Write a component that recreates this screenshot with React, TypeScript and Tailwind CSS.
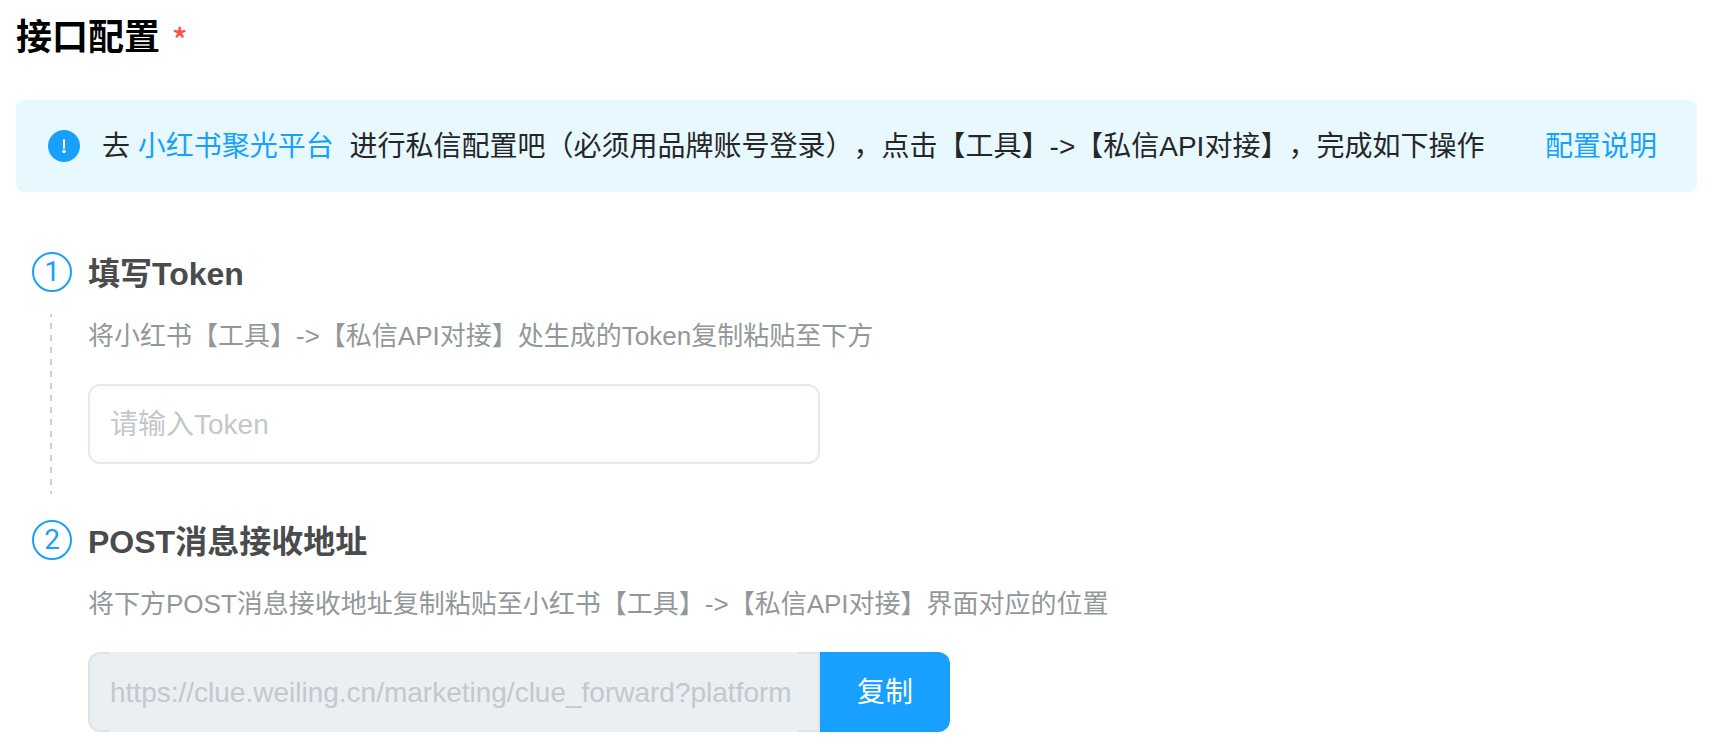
import React from 'react';

interface StepProps {
  index: number;
  title: React.ReactNode;
  description: string;
  last?: boolean;
  children: React.ReactNode;
}

const Step: React.FC<StepProps> = ({ index, title, description, last, children }) => (
  <li className="flex gap-4">
    <div className="flex w-10 shrink-0 flex-col items-center">
      <span className="flex size-10 items-center justify-center rounded-full border-2 border-[#18a0ff] font-['Roboto',sans-serif] text-[28px] leading-none text-[#18a0ff]">
        {index}
      </span>
      {!last && (
        <span className="mt-[22px] mr-0.5 mb-[26px] w-0.5 grow bg-[repeating-linear-gradient(to_bottom,#cfcfcf_0_3px,transparent_3px_9px,#cfcfcf_9px_12px)]" />
      )}
    </div>
    <div className={last ? 'min-w-0 grow' : 'min-w-0 grow pb-14'}>
      <h3 className="pt-0.5 text-[32px] leading-10 font-bold text-[#4a4b4d]">{title}</h3>
      <p className="mt-[22px] mb-7 text-[26px] leading-10 text-[#929899]">{description}</p>
      {children}
    </div>
  </li>
);

export default function App() {
  return (
    <main className="pt-3 pr-[21px] pb-4 pl-4 font-['Liberation_Sans','Noto_Sans_CJK_SC',sans-serif] [text-spacing-trim:space-all]">
      <h2 className="flex items-center gap-3 pt-0.5 text-[36px] leading-12 font-bold text-black">
        接口配置
        <span className="font-['Noto_Sans_CJK_SC',sans-serif] text-[32px] font-medium text-[#ff4d4f]">*</span>
      </h2>

      <div className="mt-[38px] flex min-h-23 items-center rounded-lg bg-[#e7f8ff] px-8 text-[28px] leading-10 text-[#262626]">
        <svg viewBox="0 0 32 32" className="mr-[22px] size-8 shrink-0" aria-hidden="true">
          <circle cx="16" cy="16" r="16" fill="#18a0ff" />
          <path d="M16 10v8" stroke="#fff" strokeWidth="2" strokeLinecap="round" />
          <circle cx="16" cy="21.5" r="1.7" fill="#fff" />
        </svg>
        <p className="pt-0.5">
          去 <a href="#platform" className="mr-2 text-[#18a0ff]">小红书聚光平台</a>{' '}
          进行私信配置吧（必须用品牌账号登录），点击【工具】-&gt;【私信API对接】，完成如下操作
        </p>
        <a href="#guide" className="mr-2 ml-auto shrink-0 pt-0.5 text-[#18a0ff]">配置说明</a>
      </div>

      <ol className="mt-15 pl-4">
        <Step
          index={1}
          title={<label htmlFor="token">填写Token</label>}
          description="将小红书【工具】->【私信API对接】处生成的Token复制粘贴至下方"
        >
          <input
            id="token"
            type="text"
            placeholder="请输入Token"
            className="block h-20 w-full max-w-[732px] rounded-xl border-2 border-[#e6eaee] bg-white px-5 pt-0.5 text-[28px] text-[#262626] outline-none placeholder:text-[#c3c8cc] focus:border-[#18a0ff]"
          />
        </Step>
        <Step
          index={2}
          last
          title={<label htmlFor="address">POST消息接收地址</label>}
          description="将下方POST消息接收地址复制粘贴至小红书【工具】->【私信API对接】界面对应的位置"
        >
          <div className="flex h-20 max-w-[862px]">
            <div className="flex min-w-0 grow rounded-l-xl border-2 border-[#dfe3e6] bg-[#eaeff3] px-5">
              <input
                id="address"
                type="text"
                readOnly
                value="https://clue.weiling.cn/marketing/clue_forward?platform"
                className="-my-0.5 min-w-0 grow bg-[#eaeff3] pt-0.5 text-[28px] text-[#c3c8cc] outline-none"
              />
            </div>
            <button type="button" className="w-[130px] shrink-0 cursor-pointer rounded-r-xl bg-[#18a0ff] pt-0.5 text-[28px] text-white">
              复制
            </button>
          </div>
        </Step>
      </ol>
    </main>
  );
}
